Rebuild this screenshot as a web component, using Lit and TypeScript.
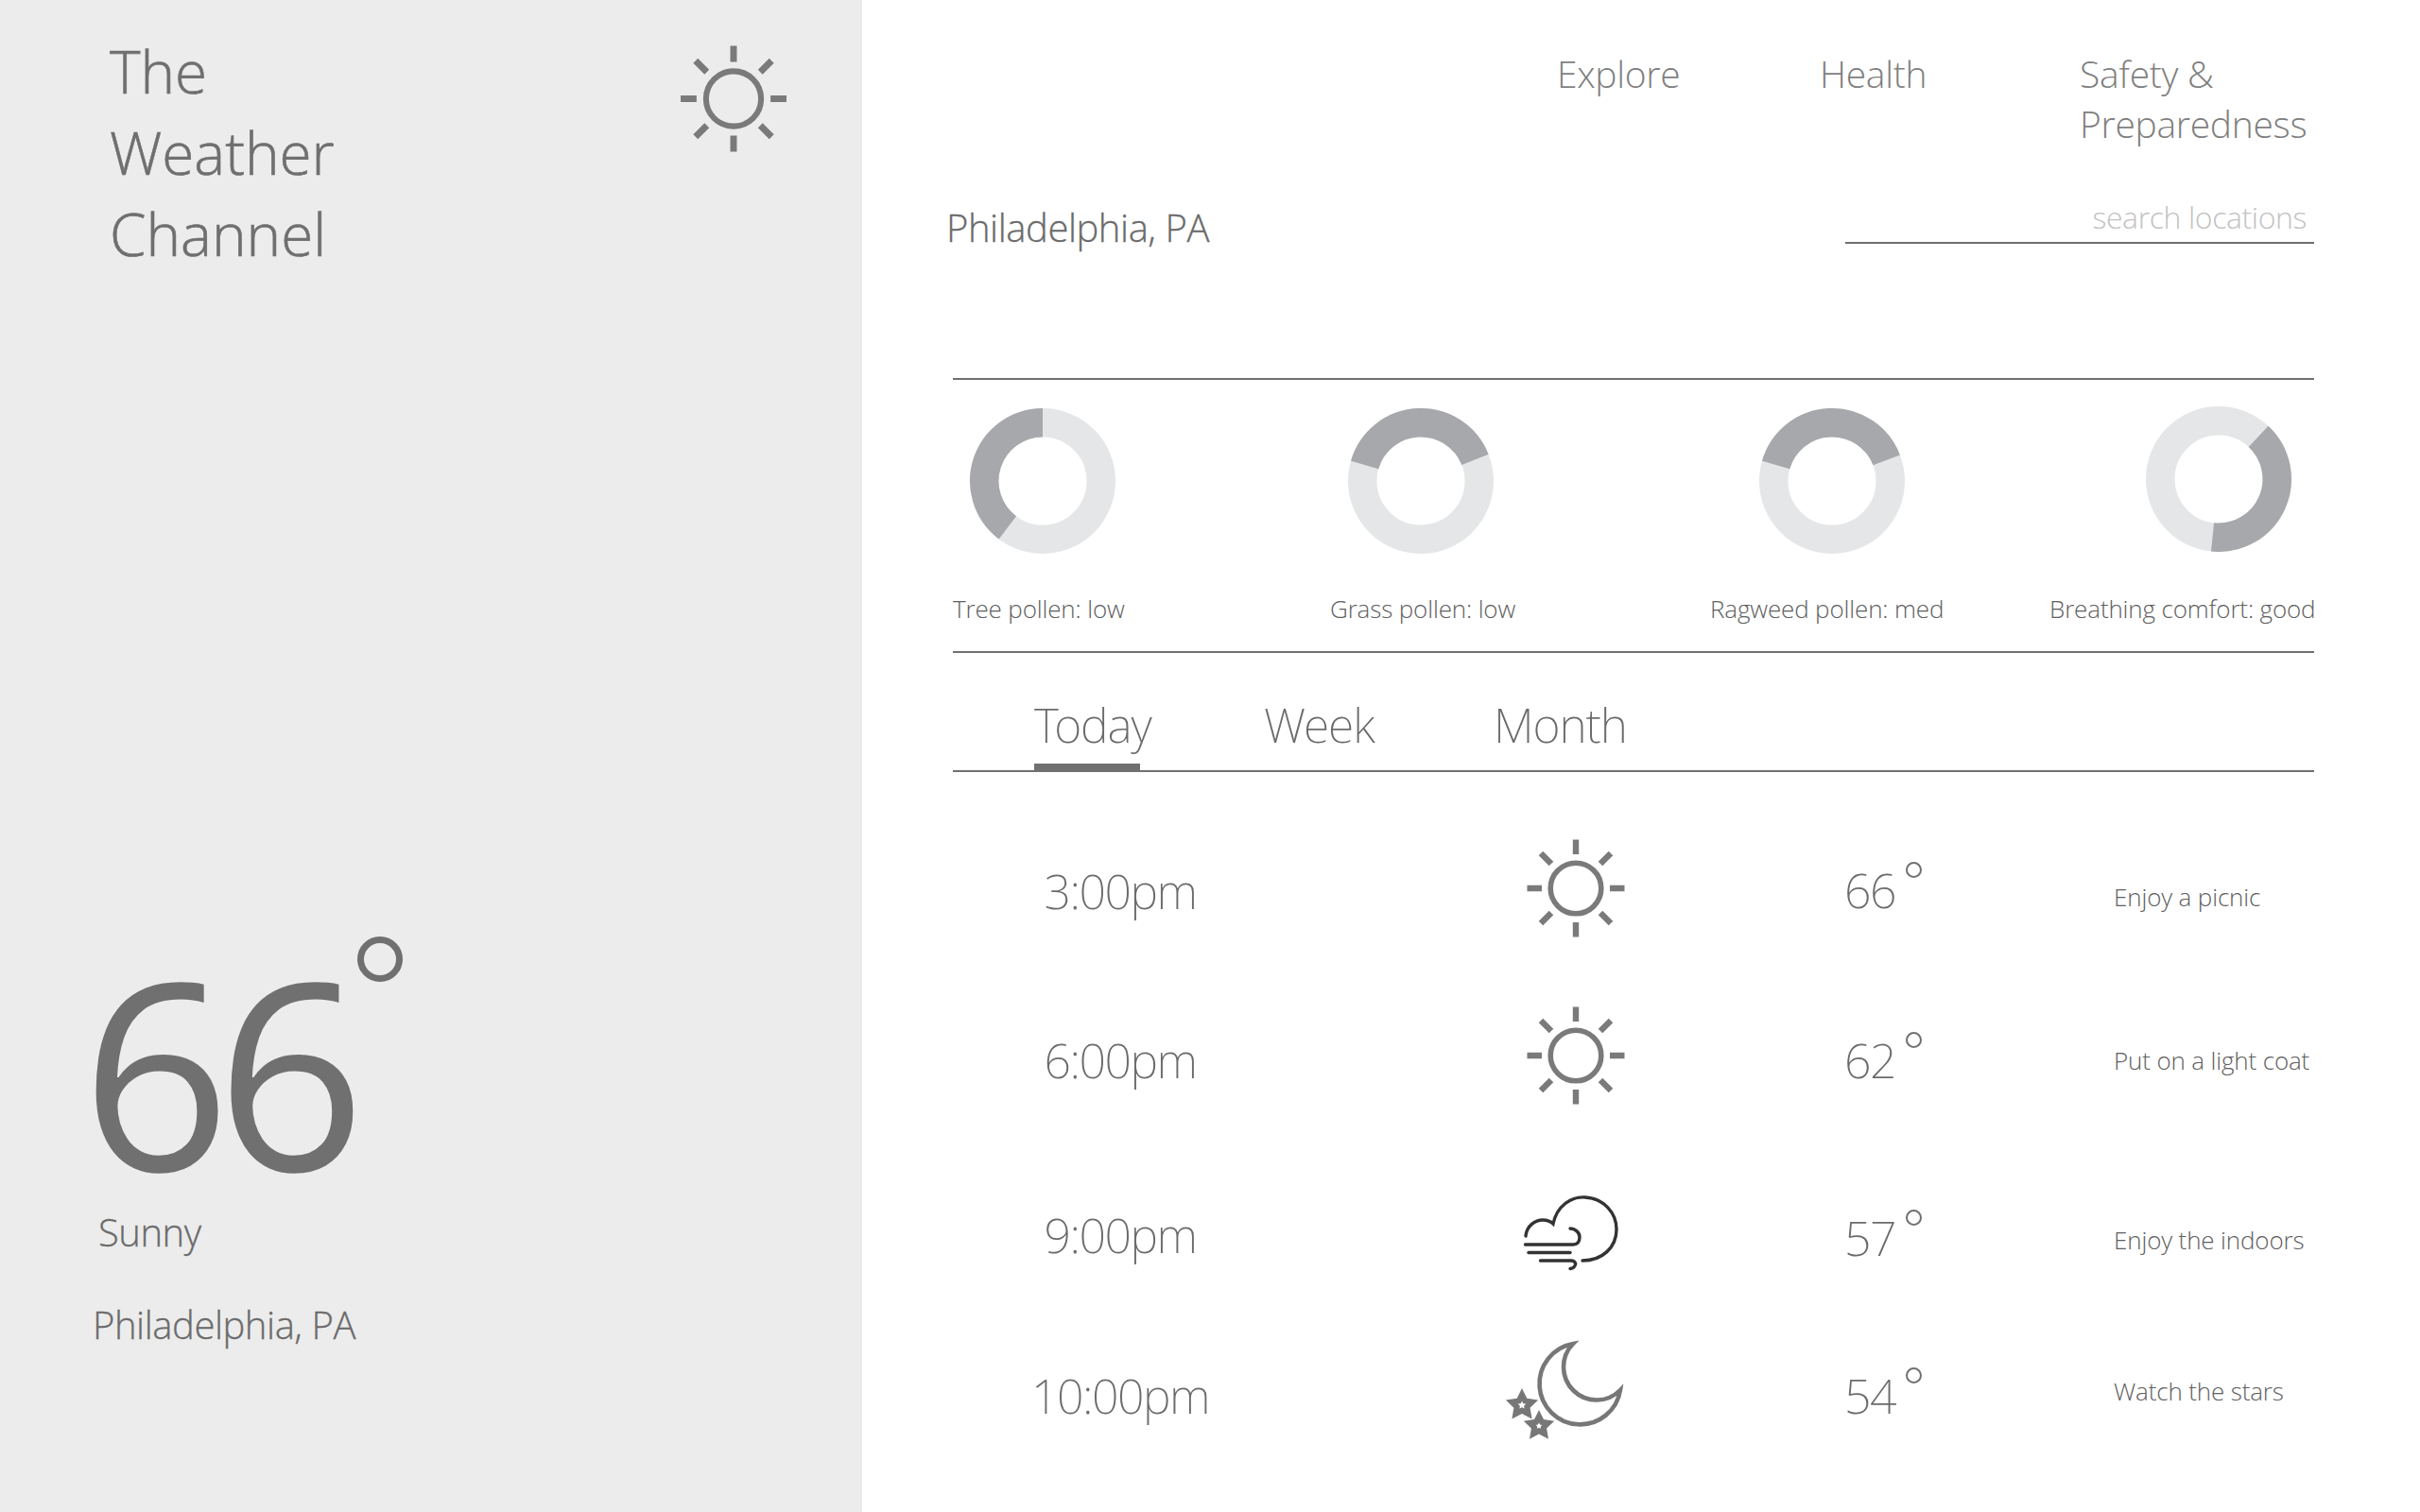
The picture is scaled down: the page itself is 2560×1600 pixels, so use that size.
import { LitElement, html, css, svg } from 'lit';
import { customElement } from 'lit/decorators.js';

const polar = (r: number, deg: number) => {
  const a = ((deg - 90) * Math.PI) / 180;
  return `${(80 + r * Math.cos(a)).toFixed(2)} ${(80 + r * Math.sin(a)).toFixed(2)}`;
};

const star = (cx: number, cy: number, r: number) => {
  const pts: string[] = [];
  for (let i = 0; i < 10; i++) {
    const a = (i * 36 - 90) * (Math.PI / 180);
    const rad = i % 2 ? r * 0.5 : r;
    pts.push(`${(cx + rad * Math.cos(a)).toFixed(1)},${(cy + rad * Math.sin(a)).toFixed(1)}`);
  }
  return pts.join(' ');
};

const sunIcon = (cls: string) => html`
  <svg class=${cls} viewBox="0 0 104 104" fill="none" stroke="#7a7a7a">
    <circle cx="52" cy="52" r="26.8" stroke-width="5.6"></circle>
    <path
      stroke-width="6.4"
      d="M52 0.500V16M52 88V103.500M0.500 52H16M88 52H103.500M15 15L26 26M89 15L78 26M15 89L26 78M89 89L78 78"
    ></path>
  </svg>
`;

const windIcon = html`
  <svg class="wind" viewBox="50 40 114 90" fill="none" stroke="#333" stroke-width="3.4" stroke-linecap="round">
    <path d="M54 88C55 77 64 71 72 71C76 71 80 72 83 75C87 56 102 46 117 47C136 48 150 63 150 81C150 100 135 114 114 114"></path>
    <path d="M53.500 97H104C110 97 111 92 111 89C111 84 106 80 101 80"></path>
    <path d="M57 105.500H101"></path>
    <path d="M69.500 114H102C106 114 107 117 106.500 118C106 121 104 122 101 122.500"></path>
  </svg>
`;

const moonIcon = html`
  <svg class="moon" viewBox="15 20 164 115">
    <path
      d="M94 32A43 43 0 1 0 144 81A35 35 0 0 1 94 32Z"
      fill="#fff"
      stroke="#777"
      stroke-width="4.600"
      stroke-linejoin="miter"
    ></path>
    <polygon points=${star(40, 97, 18)} fill="#777"></polygon>
    <polygon points=${star(40, 97, 4.5)} fill="#fff"></polygon>
    <polygon points=${star(58, 119, 17)} fill="#777"></polygon>
    <polygon points=${star(58, 119, 3.5)} fill="#fff"></polygon>
  </svg>
`;

const pollen = [
  { label: 'Tree pollen: low', from: 217, to: 360, cls: 'p1' },
  { label: 'Grass pollen: low', from: -74, to: 68.5, cls: 'p2' },
  { label: 'Ragweed pollen: med', from: -74, to: 69, cls: 'p3' },
  { label: 'Breathing comfort: good', from: 43, to: 186, cls: 'p4' },
];

// the rows do not sit on an even rhythm, so each cell keeps its own drop from the row top
const forecast = [
  { time: '3:00pm', icon: sunIcon('sun'), temp: '66', note: 'Enjoy a picnic', drop: [56, 36, 55, 79] },
  { time: '6:00pm', icon: sunIcon('sun'), temp: '62', note: 'Put on a light coat', drop: [58, 36, 58, 75] },
  { time: '9:00pm', icon: windIcon, temp: '57', note: 'Enjoy the indoors', drop: [66, 54, 69, 88] },
  { time: '10:00pm', icon: moonIcon, temp: '54', note: 'Watch the stars', drop: [41, 9, 41, 53] },
];

@customElement('app-root')
export class AppRoot extends LitElement {
  static styles = css`
    :host {
      display: block;
      width: 2560px;
      height: 1600px;
      overflow: hidden;
      background: #fff;
      color: #6b6b6b;
      font-family: 'Open Sans', 'Noto Sans', sans-serif;
      font-weight: 300;
    }
    .page {
      display: flex;
      height: 1600px;
    }
    .side {
      width: 912px;
      flex: none;
      box-sizing: border-box;
      background: #ececec;
      display: flex;
      flex-direction: column;
      padding: 32px 79px 0 0;
    }
    .side-head {
      display: flex;
      justify-content: space-between;
      align-items: flex-start;
      height: 955px;
    }
    .brand {
      margin: 0 0 0 116px;
      font: inherit;
      font-size: 62px;
      line-height: 86px;
      -webkit-text-stroke: 0.600px #6f6f6f;
      color: #6f6f6f;
      width: 260px;
    }
    .brand-sun {
      width: 114px;
      height: 113px;
      margin-top: 16px;
    }
    .now {
      display: flex;
      align-items: flex-start;
      padding-left: 86px;
      height: 287px;
      font-weight: 400;
      color: #707070;
    }
    .now-temp {
      font-size: 276px;
      line-height: 290px;
      letter-spacing: -15px;
    }
    .now-deg {
      width: 48px;
      height: 48px;
      box-sizing: border-box;
      border: 7px solid #707070;
      border-radius: 50%;
      margin: 4px 0 0 6px;
    }
    .cond {
      margin: 0 0 0 104px;
      font-size: 40px;
      line-height: 60px;
      letter-spacing: -0.500px;
      -webkit-text-stroke: 0.300px #6b6b6b;
    }
    .place {
      margin: 38px 0 0 98px;
      font-size: 40px;
      line-height: 60px;
      letter-spacing: -0.450px;
      -webkit-text-stroke: 0.300px #6b6b6b;
    }
    .main {
      flex: 1;
      min-width: 0;
      box-sizing: border-box;
      padding: 51px 112px 0 96px;
      display: flex;
      flex-direction: column;
    }
    .nav {
      display: grid;
      grid-template-columns: 278px 275px auto;
      margin-left: 639px;
      font-size: 39px;
      line-height: 53px;
      letter-spacing: -0.300px;
      color: #7f7f7f;
      height: 133px;
    }
    .search-row {
      display: flex;
      justify-content: space-between;
      box-sizing: border-box;
      padding-top: 29px;
      margin-left: -7px;
      height: 216px;
    }
    .city {
      font-size: 40px;
      line-height: 56px;
      letter-spacing: -0.450px;
      -webkit-text-stroke: 0.300px #6b6b6b;
    }
    .search {
      width: 496px;
      height: 45px;
      border-bottom: 2px solid #707070;
      color: #c2c2c2;
      font-size: 32px;
      line-height: 34px;
      letter-spacing: -0.400px;
      text-align: right;
      padding-right: 8px;
      box-sizing: border-box;
    }
    .pollen {
      border-top: 2px solid #707070;
      border-bottom: 2px solid #707070;
      height: 291px;
      box-sizing: border-box;
    }
    .gauges {
      display: grid;
      grid-template-columns: 399px 402px 359px auto;
    }
    .gauge svg {
      display: block;
      width: 160px;
      height: 160px;
      margin-top: 27px;
    }
    .gauge span {
      display: block;
      margin-top: 37px;
      font-size: 26px;
      line-height: 36px;
      letter-spacing: -0.150px;
      color: #606060;
      white-space: nowrap;
    }
    .p1 svg {
      margin-left: 15px;
    }
    .p2 svg {
      margin-left: 16px;
    }
    .p3 svg {
      margin-left: 49px;
    }
    .p4 svg {
      margin-left: 99px;
      margin-top: 25px;
    }
    .p4 span {
      margin-top: 39px;
    }
    .tabs {
      display: flex;
      padding-left: 86px;
      height: 126px;
      box-sizing: border-box;
      border-bottom: 2px solid #707070;
      font-family: 'Noto Sans', 'Open Sans', sans-serif;
      font-size: 50px;
      line-height: 70px;
      font-weight: 200;
      letter-spacing: -1.100px;
    }
    .tab {
      padding-top: 41px;
      height: 124px;
      box-sizing: border-box;
    }
    .tab.today,
    .tab.week {
      width: 243px;
    }
    .tab.on {
      position: relative;
    }
    .tab.on::after {
      content: '';
      position: absolute;
      left: 0;
      top: 117px;
      width: 112px;
      height: 8px;
      background: #707070;
    }
    .rows {
      display: grid;
      grid-template-columns: 354px 589px 285px auto;
      grid-template-rows: 177px 177px 195px 127px;
      padding-top: 35px;
      align-items: start;
    }
    .time {
      font-family: 'Noto Sans', 'Open Sans', sans-serif;
      font-size: 50px;
      font-weight: 200;
      line-height: 70px;
      letter-spacing: -1.500px;
      text-align: center;
    }
    .icon {
      display: flex;
      justify-content: center;
      padding-left: 21px;
    }
    .sun {
      width: 104px;
      height: 104px;
    }
    .wind {
      width: 114px;
      height: 90px;
    }
    .moon {
      width: 164px;
      height: 115px;
    }
    .temp {
      display: flex;
      align-items: flex-start;
      font-family: 'Noto Sans', 'Open Sans', sans-serif;
      font-size: 50px;
      font-weight: 200;
      line-height: 70px;
      letter-spacing: -1.400px;
    }
    .temp span {
      width: 65px;
    }
    .temp i {
      display: block;
      width: 17px;
      height: 17px;
      box-sizing: border-box;
      border: 2px solid #707070;
      border-radius: 50%;
      margin-top: 5px;
    }
    .note {
      font-size: 26px;
      line-height: 36px;
      letter-spacing: -0.150px;
      color: #606060;
      white-space: nowrap;
    }
  `;

  private gauge(p: (typeof pollen)[number]) {
    const r = 61.75;
    const span = p.to - p.from;
    const arc = `M${polar(r, p.from)}A${r} ${r} 0 ${span > 180 ? 1 : 0} 1 ${polar(r, p.to - 0.01)}`;
    return html`
      <div class="gauge ${p.cls}">
        <svg viewBox="0 0 160 160" fill="none" stroke-width="30.5">
          <circle cx="80" cy="80" r=${r} stroke="#e5e6e7"></circle>
          ${svg`<path d=${arc} stroke="#a7a8ab"></path>`}
        </svg>
        <span>${p.label}</span>
      </div>
    `;
  }

  render() {
    return html`
      <div class="page">
        <aside class="side">
          <div class="side-head">
            <h1 class="brand">The Weather Channel</h1>
            ${sunIcon('brand-sun')}
          </div>
          <div class="now">
            <div class="now-temp">66</div>
            <div class="now-deg"></div>
          </div>
          <p class="cond">Sunny</p>
          <p class="place">Philadelphia, PA</p>
        </aside>
        <main class="main">
          <nav class="nav">
            <a>Explore</a>
            <a>Health</a>
            <a>Safety &amp;<br />Preparedness</a>
          </nav>
          <div class="search-row">
            <div class="city">Philadelphia, PA</div>
            <div class="search">search locations</div>
          </div>
          <section class="pollen">
            <div class="gauges">${pollen.map((p) => this.gauge(p))}</div>
          </section>
          <div class="tabs">
            <div class="tab today on">Today</div>
            <div class="tab week">Week</div>
            <div class="tab">Month</div>
          </div>
          <div class="rows">
            ${forecast.map(
              (f) => html`
                <div class="time" style="margin-top:${f.drop[0]}px">${f.time}</div>
                <div class="icon" style="margin-top:${f.drop[1]}px">${f.icon}</div>
                <div class="temp" style="margin-top:${f.drop[2]}px"><span>${f.temp}</span><i></i></div>
                <div class="note" style="margin-top:${f.drop[3]}px">${f.note}</div>
              `
            )}
          </div>
        </main>
      </div>
    `;
  }
}
